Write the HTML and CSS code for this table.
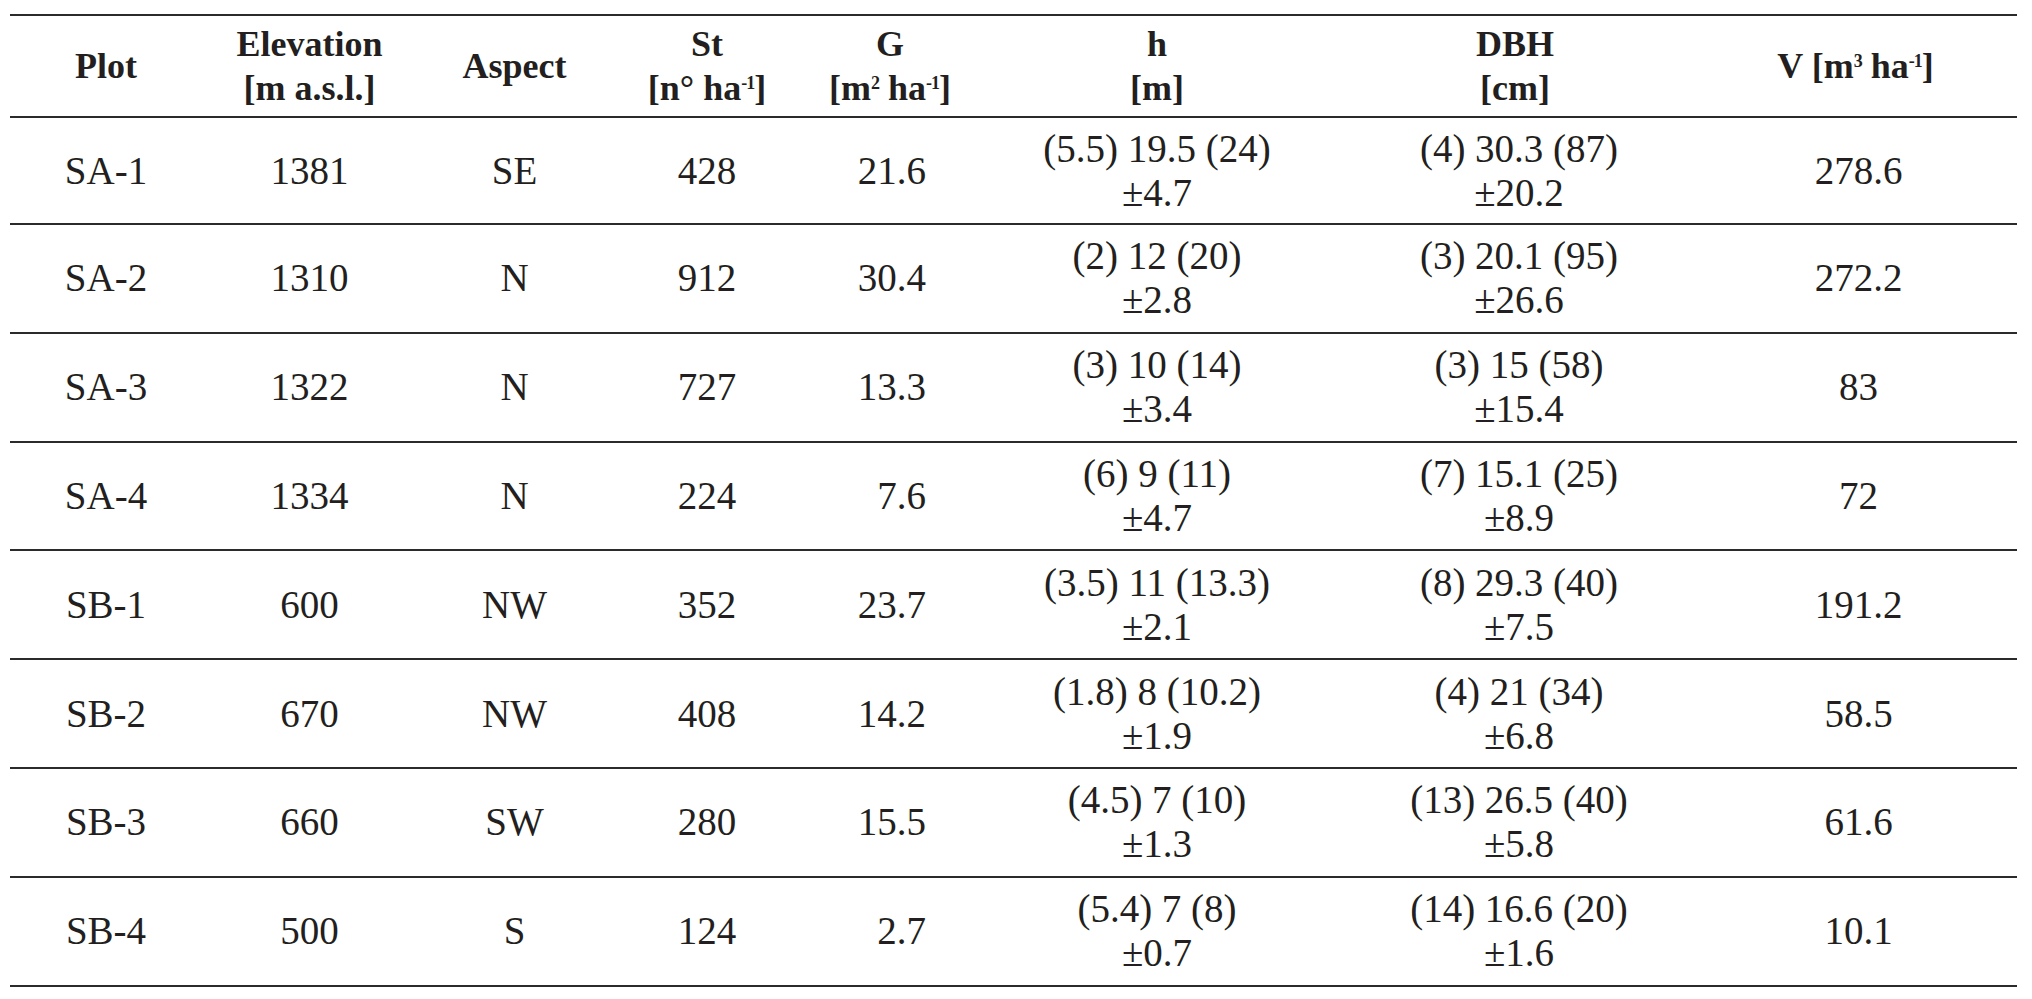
FILE: index.html
```html
<!DOCTYPE html>
<html lang="en">
<head>
<meta charset="utf-8">
<title>Plot characteristics</title>
<link rel="stylesheet" href="styles.css">
</head>
<body>
<table class="data">
  <colgroup>
    <col class="c-plot"><col class="c-elev"><col class="c-asp"><col class="c-st"><col class="c-g"><col class="c-h"><col class="c-dbh"><col class="c-v">
  </colgroup>
  <thead>
    <tr>
      <th>Plot</th>
      <th>Elevation<br>[m a.s.l.]</th>
      <th>Aspect</th>
      <th>St<br>[n° ha<sup>-1</sup>]</th>
      <th>G<br>[m<sup>2</sup> ha<sup>-1</sup>]</th>
      <th>h<br>[m]</th>
      <th>DBH<br>[cm]</th>
      <th>V [m<sup>3</sup> ha<sup>-1</sup>]</th>
    </tr>
  </thead>
  <tbody>
    <tr><td>SA-1</td><td>1381</td><td>SE</td><td>428</td><td class="g">21.6</td><td>(5.5) 19.5 (24)<br>±4.7</td><td class="dbh">(4) 30.3 (87)<br>±20.2</td><td class="v">278.6</td></tr>
    <tr><td>SA-2</td><td>1310</td><td>N</td><td>912</td><td class="g">30.4</td><td>(2) 12 (20)<br>±2.8</td><td class="dbh">(3) 20.1 (95)<br>±26.6</td><td class="v">272.2</td></tr>
    <tr><td>SA-3</td><td>1322</td><td>N</td><td>727</td><td class="g">13.3</td><td>(3) 10 (14)<br>±3.4</td><td class="dbh">(3) 15 (58)<br>±15.4</td><td class="v">83</td></tr>
    <tr><td>SA-4</td><td>1334</td><td>N</td><td>224</td><td class="g">7.6</td><td>(6) 9 (11)<br>±4.7</td><td class="dbh">(7) 15.1 (25)<br>±8.9</td><td class="v">72</td></tr>
    <tr><td>SB-1</td><td>600</td><td>NW</td><td>352</td><td class="g">23.7</td><td>(3.5) 11 (13.3)<br>±2.1</td><td class="dbh">(8) 29.3 (40)<br>±7.5</td><td class="v">191.2</td></tr>
    <tr><td>SB-2</td><td>670</td><td>NW</td><td>408</td><td class="g">14.2</td><td>(1.8) 8 (10.2)<br>±1.9</td><td class="dbh">(4) 21 (34)<br>±6.8</td><td class="v">58.5</td></tr>
    <tr><td>SB-3</td><td>660</td><td>SW</td><td>280</td><td class="g">15.5</td><td>(4.5) 7 (10)<br>±1.3</td><td class="dbh">(13) 26.5 (40)<br>±5.8</td><td class="v">61.6</td></tr>
    <tr><td>SB-4</td><td>500</td><td>S</td><td>124</td><td class="g">2.7</td><td>(5.4) 7 (8)<br>±0.7</td><td class="dbh">(14) 16.6 (20)<br>±1.6</td><td class="v">10.1</td></tr>
  </tbody>
</table>
</body>
</html>
```
FILE: styles.css
```css
html, body {
  margin: 0;
  padding: 0;
  background: #ffffff;
}

body {
  font-family: "Liberation Serif", "Times New Roman", serif;
  color: #231f20;
}

.data {
  margin: 14px 0 0 10px;
  width: 2007px;
  table-layout: fixed;
  border-collapse: separate;
  border-spacing: 0;
}

.c-plot { width: 192px; }
.c-elev { width: 215px; }
.c-asp  { width: 195px; }
.c-st   { width: 190px; }
.c-g    { width: 176px; }
.c-h    { width: 358px; }
.c-dbh  { width: 358px; }
.c-v    { width: 323px; }

.data th {
  box-sizing: border-box;
  height: 104px;
  padding: 0;
  font-size: 36px;
  line-height: 44px;
  font-weight: bold;
  text-align: center;
  vertical-align: middle;
  border-top: 2px solid #2b2b2b;
  border-bottom: 2px solid #2b2b2b;
}

.data td {
  box-sizing: border-box;
  height: 108.8px;
  padding: 0;
  font-size: 39px;
  line-height: 44px;
  text-align: center;
  vertical-align: middle;
  border-bottom: 2px solid #2b2b2b;
}

.data tbody tr:first-child td {
  height: 107px;
}

.data td.g {
  text-align: right;
  padding-right: 52px;
}

.data td.dbh {
  padding-left: 8px;
}

.data td.v {
  padding-left: 6px;
}

.data sup {
  font-size: 18px;
  line-height: 0;
  vertical-align: 11px;
  letter-spacing: -1px;
}
```
